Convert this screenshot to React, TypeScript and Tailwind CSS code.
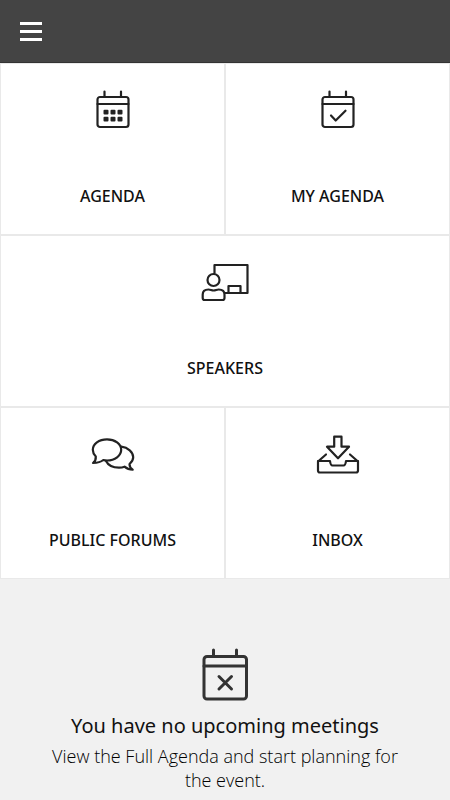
import type { ReactNode } from 'react'

type Tile = {
  label: string
  href: string
  icon: ReactNode
  wide?: boolean
}

function CalendarFrame({ children }: { children: ReactNode }) {
  return (
    <>
      <rect x="8.500" y="9" width="31" height="30" rx="2.5" />
      <path d="M8.500 16h31M15.500 3.500v5.500M32 3.500v5.500" />
      {children}
    </>
  )
}

const tiles: Tile[] = [
  {
    label: 'AGENDA',
    href: '#agenda',
    icon: (
      <CalendarFrame>
        <g fill="currentColor" stroke="none">
          <rect x="14.500" y="21.700" width="5" height="4.700" rx="1" />
          <rect x="21.500" y="21.700" width="5" height="4.700" rx="1" />
          <rect x="28.500" y="21.700" width="5" height="4.700" rx="1" />
          <rect x="14.500" y="28.700" width="5" height="4.700" rx="1" />
          <rect x="21.500" y="28.700" width="5" height="4.700" rx="1" />
          <rect x="28.500" y="28.700" width="5" height="4.700" rx="1" />
        </g>
      </CalendarFrame>
    ),
  },
  {
    label: 'MY AGENDA',
    href: '#my-agenda',
    icon: (
      <CalendarFrame>
        <path d="M17 27.500l4.700 5 9.800-9.800" />
      </CalendarFrame>
    ),
  },
  {
    label: 'SPEAKERS',
    href: '#speakers',
    wide: true,
    icon: (
      <>
        <path d="M13.500 13V5H46.500V33H24" />
        <path d="M27.500 33V26H39.500V33" />
        <circle cx="12.500" cy="20" r="6" />
        <path d="M1.700 38V34.500C1.700 31 4 29.500 7.500 29.500C9.500 29.500 10.500 30.500 12.600 30.500S15.700 29.500 17.700 29.500C21.200 29.500 23.500 31 23.500 34.500V38Q23.500 40 21.500 40H3.700Q1.700 40 1.700 38Z" />
      </>
    ),
  },
  {
    label: 'PUBLIC FORUMS',
    href: '#forums',
    icon: (
      <>
        <path d="M6.800 24.500C4.800 22.500 3.800 20.300 3.800 17.800C3.800 12 10 7.300 18 7.300S32.200 12 32.200 17.800S26 28.500 18 28.500Q16 28.500 14.300 28Q11 30.800 4 31Q7.100 28.500 6.800 24.500Z" />
        <path d="M32.200 14.700C39 15.500 44.200 20 44.200 25.300Q44.200 29 40.500 32Q40.500 35.700 43.700 37.700Q39 37.700 35.500 34.700Q33 35.700 30 35.700C24 35.700 19 33 17 29" />
      </>
    ),
  },
  {
    label: 'INBOX',
    href: '#inbox',
    icon: (
      <>
        <path d="M20.200 4.700H27.500V14.700H35L24 26.300L13 14.700H20.200Z" />
        <path d="M12 22.500L4 29.500V38.500Q4 40.500 6 40.500H42Q44 40.500 44 38.500V29.500L36 22.500" />
        <path d="M4 29H16Q16.500 33.500 18.500 33.500H29.500Q31.500 33.500 32 29H44" />
      </>
    ),
  },
]

function TileLink({ tile }: { tile: Tile }) {
  return (
    <a
      href={tile.href}
      className={`flex flex-col items-center border border-[#e9e9e9] bg-white pt-6 pb-[26px] ${
        tile.wide ? 'col-span-2' : ''
      }`}
    >
      <svg
        viewBox="0 0 48 48"
        className="size-12 text-[#222]"
        fill="none"
        stroke="currentColor"
        strokeWidth={2.2}
        strokeLinecap="round"
        strokeLinejoin="round"
        aria-hidden="true"
      >
        {tile.icon}
      </svg>
      <span className="mt-12 font-['Noto_Sans','Open_Sans',sans-serif] text-base leading-6 font-medium text-[#111]">
        {tile.label}
      </span>
    </a>
  )
}

export default function App() {
  return (
    <div className="min-h-screen bg-[#f1f1f1] font-['Open_Sans',sans-serif] text-[#111]">
      <header className="flex h-[63px] items-center border-b border-[#333] bg-[#444] px-5">
        <button type="button" aria-label="Menu" className="flex flex-col gap-[5px]">
          <span className="h-[3px] w-[22px] bg-white"></span>
          <span className="h-[3px] w-[22px] bg-white"></span>
          <span className="h-[3px] w-[22px] bg-white"></span>
        </button>
      </header>

      <nav className="grid grid-cols-2">
        {tiles.map((tile) => (
          <TileLink key={tile.label} tile={tile} />
        ))}
      </nav>

      {/* Upcoming meetings */}
      <section className="flex flex-col items-center px-10 pt-[65px] text-center">
        <svg
          viewBox="0 0 60 60"
          className="size-[60px] text-[#333]"
          fill="none"
          stroke="currentColor"
          strokeWidth={3}
          strokeLinecap="round"
          strokeLinejoin="round"
          aria-hidden="true"
        >
          <rect x="9" y="12.500" width="42.500" height="42.500" rx="3" />
          <path d="M9 22h42.500M18.500 6v6M41.500 6v6M24 32.500l12.500 12.500M36.500 32.500l-12.500 12.500" />
        </svg>
        <h2 className="mt-2 font-['Noto_Sans','Open_Sans',sans-serif] text-xl leading-7">
          You have no upcoming meetings
        </h2>
        <p className="mt-1 text-lg leading-6 font-light text-black">
          View the Full Agenda and start planning for the event.
        </p>
      </section>
    </div>
  )
}
